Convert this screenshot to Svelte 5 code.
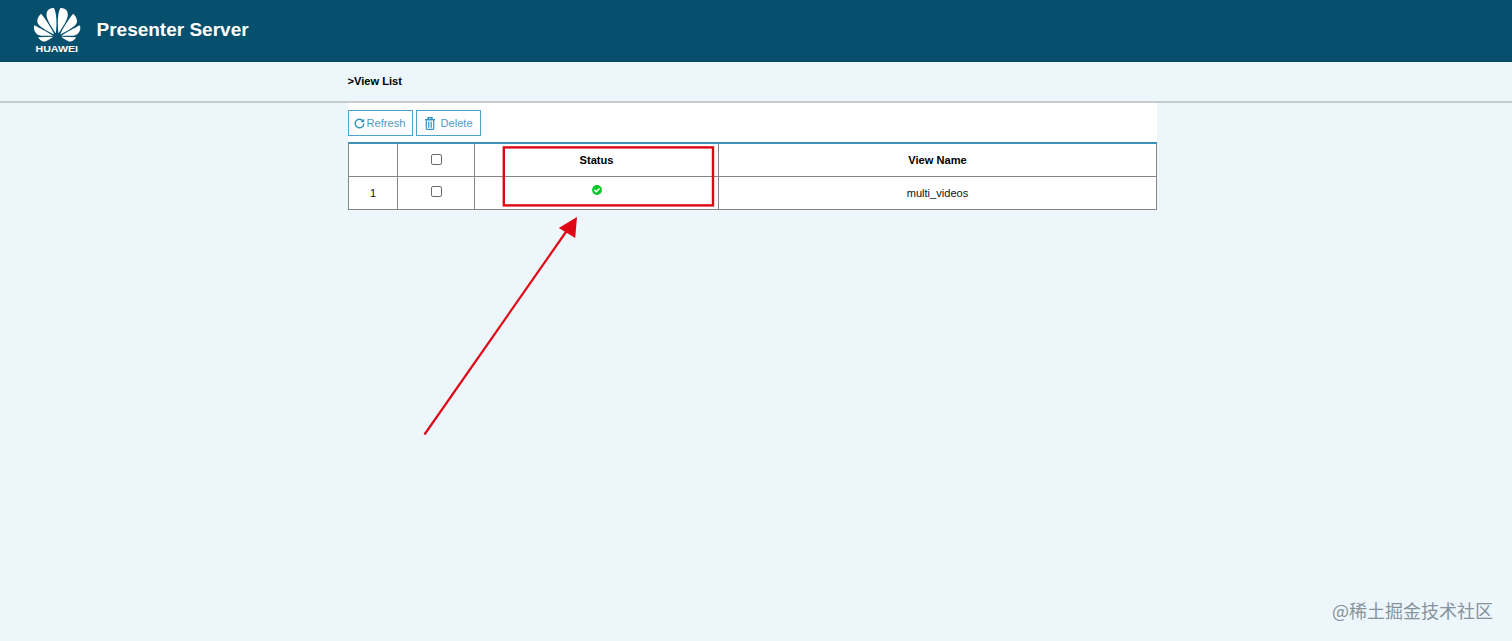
<script>
  const rows = [{ id: 1, name: 'multi_videos' }];
</script>

<div class="page">
  <header>
    <svg class="logo" viewBox="0 0 48 46" width="48" height="46" aria-label="HUAWEI">
      <defs>
        <path id="petals" d="M3.67 6.14S1.82 7.91 1.72 9.78v.35c.08 1.51 1.22 2.4 1.22 2.4 1.83 1.79 6.26 4.04 7.3 4.55 0 0 .06.03.1-.01l.02-.04v-.04C7.52 10.8 3.67 6.14 3.67 6.14zM9.65 18.6c-.02-.08-.1-.08-.1-.08l-7.38.26c.8 1.43 2.15 2.53 3.56 2.2.96-.25 3.16-1.78 3.88-2.3.06-.05.04-.09.04-.09zm.08-.78C6.49 15.63.21 12.28.21 12.28c-.15.46-.2.9-.21 1.3v.07c0 1.07.4 1.82.4 1.82.8 1.69 2.34 2.2 2.34 2.2.7.3 1.4.31 1.4.31.12.02 4.4 0 5.54 0 .05 0 .08-.05.08-.05v-.06c0-.03-.03-.05-.03-.05zM9.06 3.19a3.42 3.42 0 00-2.57 3.15v.41c.03.6.16 1.05.16 1.05.66 2.9 3.86 7.65 4.55 8.65.05.05.1.03.1.03a.1.1 0 00.06-.1c1.06-10.6-1.11-13.42-1.11-13.42-.32.02-1.19.23-1.19.23z" />
      </defs>
      <g fill="#fff" transform="translate(1 -5.6) scale(1.93 1.86)">
        <use href="#petals" />
        <use href="#petals" transform="translate(24 0) scale(-1 1)" />
      </g>
      <text x="2.5" y="44" textLength="42.5" lengthAdjust="spacingAndGlyphs">HUAWEI</text>
    </svg>
    <h1>Presenter Server</h1>
  </header>

  <nav>&gt;View List</nav>

  <main>
    <div class="toolbar">
      <button class="refresh">
        <svg width="11" height="11" viewBox="0 0 11 11" fill="none" stroke="#2f93bd" stroke-width="1.4">
          <path d="M9 3A4.3 4.3 0 1 0 9.8 5.6" />
          <path d="M10.2.7v3.6H6.6z" fill="#2f93bd" stroke="none" />
        </svg>
        <span>Refresh</span>
      </button>
      <button class="delete">
        <svg width="10" height="13" viewBox="0 0 10 13" fill="none" stroke="#2f93bd">
          <path d="M3 2.3V.8h4v1.5M0 2.8h10" stroke-width="1.4" />
          <path d="M1.3 3.5v8q0 .8.8.8h5.8q.8 0 .8-.8v-8" stroke-width="1.2" />
          <path d="M3.5 4.5v6.3M5 4.5v6.3M6.5 4.5v6.3" stroke-width=".8" />
        </svg>
        <span>Delete</span>
      </button>
    </div>

    <div class="table">
      <div class="row head">
        <div></div>
        <div><input type="checkbox" aria-label="Select all" /></div>
        <div>Status</div>
        <div>View Name</div>
      </div>
      {#each rows as row}
        <div class="row">
          <div>{row.id}</div>
          <div><input type="checkbox" aria-label="Select row" /></div>
          <div>
            <svg class="ok" width="10" height="10" viewBox="0 0 10 10">
              <circle cx="5" cy="5" r="4.9" fill="#06c72c" />
              <path d="M2.4 4.9l1.9 1.9 3.3-3.3" fill="none" stroke="#fff" stroke-width="1.5" />
            </svg>
          </div>
          <div>{row.name}</div>
        </div>
      {/each}
    </div>
  </main>

  <svg class="marks" width="1512" height="641" viewBox="0 0 1512 641">
    <rect x="503.8" y="147.4" width="209.2" height="58" fill="none" stroke="#df0615" stroke-width="2.4" />
    <path d="M424.5 434.5L568 229" stroke="#df0615" stroke-width="2.2" />
    <path d="M577 217L558.8 228L575.2 238z" fill="#df0615" />
  </svg>
  <div class="credit">@稀土掘金技术社区</div>
</div>

<style>
  :global(body) {
    margin: 0;
  }
  .page {
    position: relative;
    height: 641px;
    overflow: hidden;
    background: #ecf6fb;
    color: #111;
    font: 11.1px 'Liberation Sans', Arial, sans-serif;
  }
  header {
    display: flex;
    align-items: flex-start;
    height: 62px;
    box-sizing: border-box;
    padding: 8px 0 0 33px;
    background: #07506d;
    border-bottom: 1px solid #064762;
  }
  .logo text {
    fill: #fff;
    font: bold 9.3px 'Liberation Sans', Arial, sans-serif;
  }
  h1 {
    margin: 11px 0 0 15.5px;
    color: #fff;
    font-size: 19px;
    line-height: 22px;
  }
  nav {
    height: 39px;
    padding-left: 347.5px;
    border-bottom: 2px solid #c5cbce;
    font-weight: bold;
    line-height: 39px;
    color: #000;
  }
  main {
    width: 809px;
    margin-left: 348px;
    background: #fff;
  }
  .toolbar {
    display: flex;
    gap: 3px;
    height: 39px;
    padding-top: 7px;
    box-sizing: border-box;
  }
  button {
    display: flex;
    align-items: center;
    height: 26px;
    width: 65px;
    padding: 0;
    box-sizing: border-box;
    border: 1px solid #4ca3cb;
    background: #fff;
    color: #4b9dc8;
    font: 11.1px 'Liberation Sans', Arial, sans-serif;
  }
  .refresh {
    padding-left: 5px;
    gap: 1.5px;
  }
  .delete {
    padding-left: 8px;
    gap: 5.5px;
  }
  .table {
    border-top: 2px solid #3d92ba;
    border-left: 1px solid #858585;
  }
  .row {
    display: grid;
    grid-template-columns: 49px 77px 244px 438px;
    height: 33px;
  }
  .row:last-child {
    height: 32.5px;
  }
  .row > div {
    display: flex;
    align-items: center;
    justify-content: center;
    box-sizing: border-box;
    border-right: 1px solid #858585;
    border-bottom: 1px solid #858585;
  }
  .head {
    font-weight: bold;
    color: #000;
  }
  input {
    appearance: none;
    width: 11px;
    height: 11px;
    box-sizing: border-box;
    margin: 0 0 2px;
    border: 1px solid #6c6c6c;
    border-radius: 2px;
    background: #fff;
  }
  .ok {
    margin: 0 0 5px;
  }
  .marks {
    position: absolute;
    left: 0;
    top: 0;
    pointer-events: none;
  }
  .credit {
    position: absolute;
    right: 19px;
    bottom: 19px;
    color: #87939a;
    font: 18px/24px 'Noto Sans CJK SC', sans-serif;
    white-space: nowrap;
  }
</style>
